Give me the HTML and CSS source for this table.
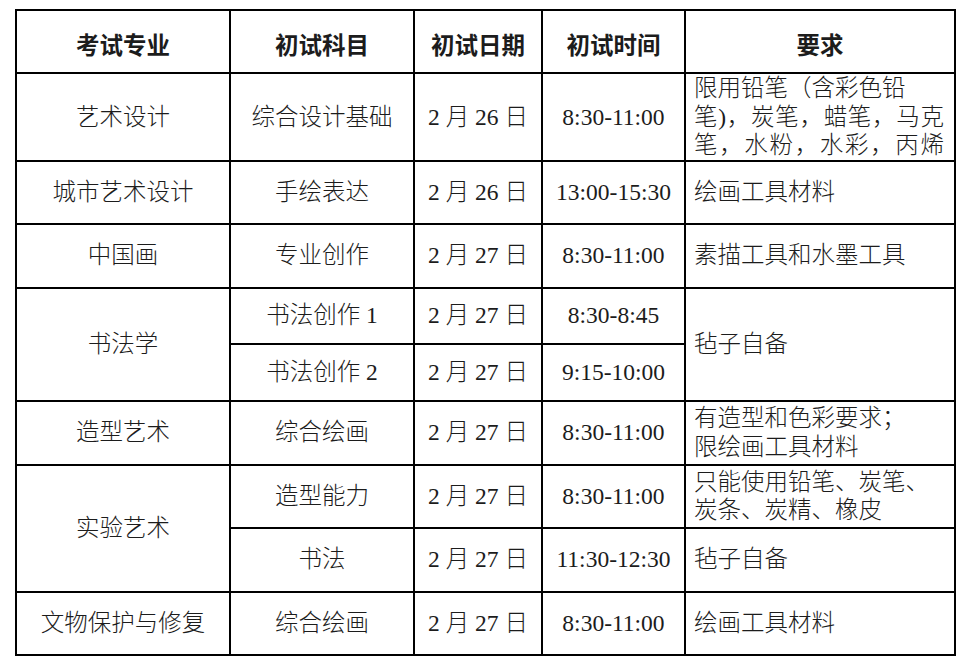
FILE: index.html
```html
<!DOCTYPE html>
<html lang="zh-CN">
<head>
<meta charset="utf-8">
<title>初试安排</title>
<link rel="stylesheet" href="styles.css">
</head>
<body>
<table class="exam">
  <colgroup>
    <col class="c1"><col class="c2"><col class="c3"><col class="c4"><col class="c5">
  </colgroup>
  <thead>
    <tr class="h63">
      <th>考试专业</th><th>初试科目</th><th>初试日期</th><th>初试时间</th><th>要求</th>
    </tr>
  </thead>
  <tbody>
    <tr class="h86">
      <td>艺术设计</td>
      <td>综合设计基础</td>
      <td>2 月 26 日</td>
      <td>8:30-11:00</td>
      <td class="req">
        <div class="lines">
          <span class="ln">限用铅笔（含彩色铅</span>
          <span class="ln just">笔)，炭笔，蜡笔，马克</span>
          <span class="ln just">笔，水粉，水彩，丙烯</span>
        </div>
      </td>
    </tr>
    <tr class="h63">
      <td>城市艺术设计</td>
      <td>手绘表达</td>
      <td>2 月 26 日</td>
      <td>13:00-15:30</td>
      <td class="req">绘画工具材料</td>
    </tr>
    <tr class="h64">
      <td>中国画</td>
      <td>专业创作</td>
      <td>2 月 27 日</td>
      <td>8:30-11:00</td>
      <td class="req">素描工具和水墨工具</td>
    </tr>
    <tr class="h56">
      <td rowspan="2">书法学</td>
      <td>书法创作 1</td>
      <td>2 月 27 日</td>
      <td>8:30-8:45</td>
      <td class="req" rowspan="2">毡子自备</td>
    </tr>
    <tr class="h57">
      <td>书法创作 2</td>
      <td>2 月 27 日</td>
      <td>9:15-10:00</td>
    </tr>
    <tr class="h64">
      <td>造型艺术</td>
      <td>综合绘画</td>
      <td>2 月 27 日</td>
      <td>8:30-11:00</td>
      <td class="req">
        <div class="lines">
          <span class="ln">有造型和色彩要求；</span>
          <span class="ln">限绘画工具材料</span>
        </div>
      </td>
    </tr>
    <tr class="h63">
      <td rowspan="2">实验艺术</td>
      <td>造型能力</td>
      <td>2 月 27 日</td>
      <td>8:30-11:00</td>
      <td class="req">
        <div class="lines">
          <span class="ln">只能使用铅笔、炭笔、</span>
          <span class="ln">炭条、炭精、橡皮</span>
        </div>
      </td>
    </tr>
    <tr class="h64">
      <td>书法</td>
      <td>2 月 27 日</td>
      <td>11:30-12:30</td>
      <td class="req">毡子自备</td>
    </tr>
    <tr class="h63">
      <td>文物保护与修复</td>
      <td>综合绘画</td>
      <td>2 月 27 日</td>
      <td>8:30-11:00</td>
      <td class="req">绘画工具材料</td>
    </tr>
  </tbody>
</table>
</body>
</html>
```

FILE: styles.css
```css
html, body {
  margin: 0;
  padding: 0;
  background: #ffffff;
}

body {
  padding: 9px 0 0 15px;
  font-family: "Liberation Serif", "Noto Sans CJK SC", serif;
  color: #1c1c1c;
}

.exam {
  border-collapse: collapse;
  table-layout: fixed;
  width: 939px;
  border: 2px solid #000;
}

.c1 { width: 214px; }
.c2 { width: 184px; }
.c3 { width: 128px; }
.c4 { width: 143px; }
.c5 { width: 270px; }

.exam th,
.exam td {
  border: 2px solid #000;
  padding: 0;
  text-align: center;
  vertical-align: middle;
  font-size: 23.5px;
  font-weight: 300;
  line-height: 28.5px;
  white-space: nowrap;
  overflow: hidden;
}

.exam th {
  font-family: "Noto Sans CJK SC", sans-serif;
  font-weight: bold;
  padding-top: 5px;
}

.h56 { height: 56px; }
.h57 { height: 57px; }
.h63 { height: 63px; }
.h64 { height: 64px; }
.h86 { height: 86px; }

.exam td.req {
  text-align: left;
  padding: 0 10px 0 8px;
}

.lines {
  display: flex;
  flex-direction: column;
}

.ln {
  display: block;
}

.just {
  text-align: justify;
  text-align-last: justify;
}
```
